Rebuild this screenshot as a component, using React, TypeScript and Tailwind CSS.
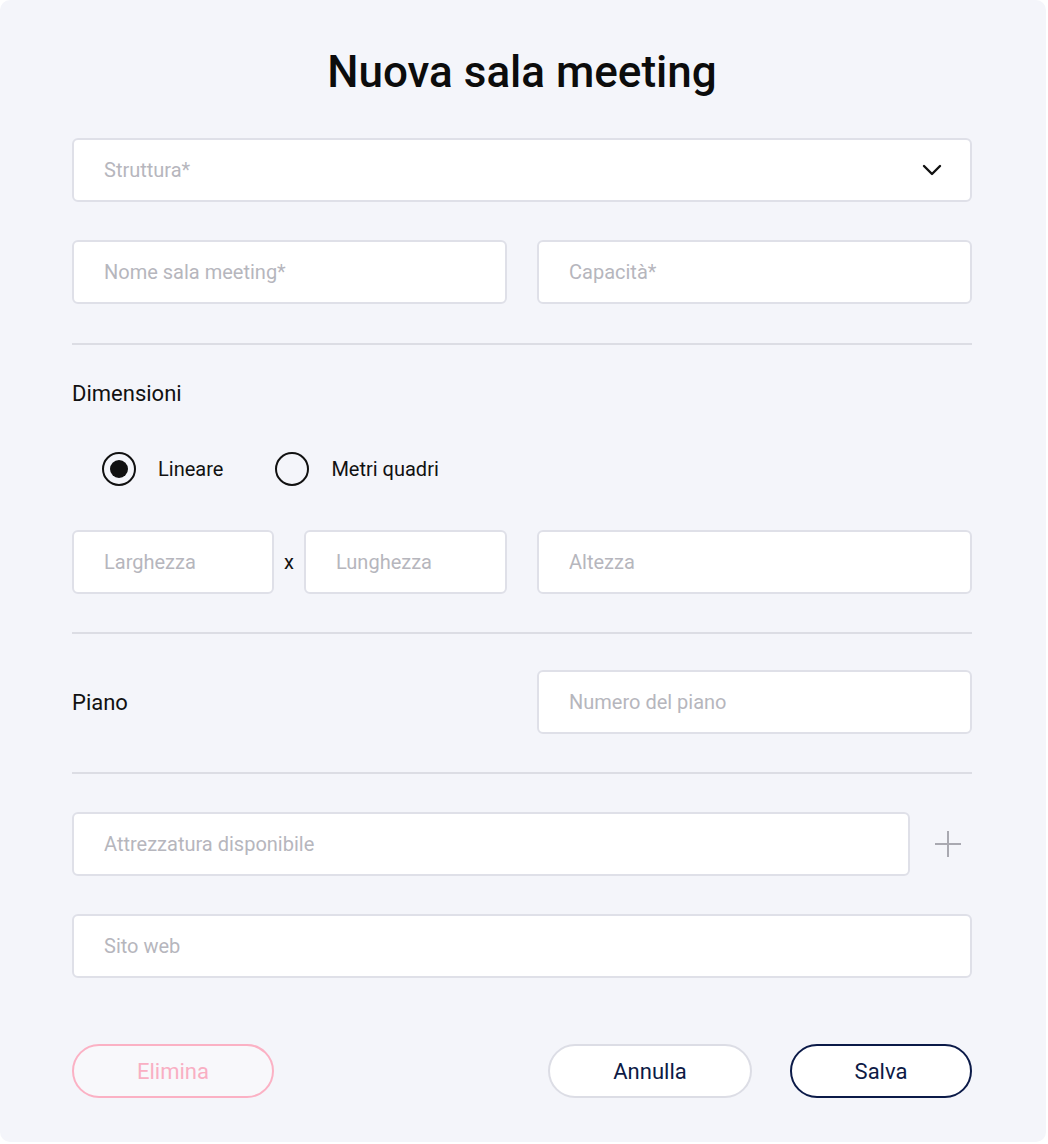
import { useState } from 'react'

const font = { fontFamily: 'Roboto, "Liberation Sans", sans-serif' }

function Field({ placeholder, className = '' }: { placeholder: string; className?: string }) {
  return (
    <input
      placeholder={placeholder}
      className={`h-[64px] min-w-0 rounded-[6px] border-2 border-[#dfe0e8] bg-white px-[30px] text-[20px] text-[#1a1a1a] placeholder:text-[#b6b6bd] outline-none ${className}`}
    />
  )
}

function Radio({ label, checked, onClick }: { label: string; checked: boolean; onClick: () => void }) {
  return (
    <button onClick={onClick} className="flex items-center gap-[22px]">
      <span className="flex h-[34px] w-[34px] items-center justify-center rounded-full border-2 border-[#111]">
        {checked && <span className="h-[18px] w-[18px] rounded-full bg-[#111]" />}
      </span>
      <span className="text-[20px] text-[#111]">{label}</span>
    </button>
  )
}

export default function App() {
  const [unit, setUnit] = useState<'lin' | 'mq'>('lin')

  return (
    <div className="min-h-screen bg-white" style={font}>
      <div className="flex h-[1142px] w-[1046px] flex-col rounded-[10px] bg-[#f4f5fa] pl-[72px] pr-[74px] pt-[46px]">
        <h1 className="text-center text-[44px] font-medium leading-[52px] text-[#0c0c0c]">Nuova sala meeting</h1>

        {/* Struttura */}
        <div className="mt-[40px] flex h-[64px] items-center justify-between rounded-[6px] border-2 border-[#dfe0e8] bg-white pl-[30px] pr-[28px]">
          <span className="text-[20px] text-[#b6b6bd]">Struttura*</span>
          <svg width="20" height="12" viewBox="0 0 20 12" fill="none">
            <path d="M2 2l8 8 8-8" stroke="#111" strokeWidth="2.4" strokeLinecap="round" strokeLinejoin="round" />
          </svg>
        </div>

        <div className="mt-[38px] grid grid-cols-2 gap-[30px]">
          <Field placeholder="Nome sala meeting*" />
          <Field placeholder="Capacità*" />
        </div>

        <div className="mt-[39px] h-[2px] bg-[#dcdde4]" />

        <div className="mt-[34px] text-[22px] leading-[30px] text-[#111]">Dimensioni</div>

        <div className="mt-[43px] flex items-center gap-[52px] pl-[30px]">
          <Radio label="Lineare" checked={unit === 'lin'} onClick={() => setUnit('lin')} />
          <Radio label="Metri quadri" checked={unit === 'mq'} onClick={() => setUnit('mq')} />
        </div>

        <div className="mt-[44px] grid grid-cols-2 gap-[30px]">
          <div className="flex items-center">
            <Field placeholder="Larghezza" className="w-[202px]" />
            <span className="w-[30px] text-center text-[20px] text-[#111]">x</span>
            <Field placeholder="Lunghezza" className="flex-1" />
          </div>
          <Field placeholder="Altezza" />
        </div>

        <div className="mt-[38px] h-[2px] bg-[#dcdde4]" />

        <div className="mt-[36px] grid grid-cols-2 items-center gap-[30px]">
          <span className="text-[22px] text-[#111]">Piano</span>
          <Field placeholder="Numero del piano" />
        </div>

        <div className="mt-[38px] h-[2px] bg-[#dcdde4]" />

        <div className="mt-[38px] flex items-center">
          <Field placeholder="Attrezzatura disponibile" className="flex-1" />
          <button className="ml-[25px] mr-[11px] text-[#a9a9b1]">
            <svg width="26" height="26" viewBox="0 0 26 26">
              <path d="M13 0v26M0 13h26" stroke="currentColor" strokeWidth="2" />
            </svg>
          </button>
        </div>

        <Field placeholder="Sito web" className="mt-[38px]" />

        <div className="mt-[66px] flex items-center">
          <button className="h-[54px] w-[202px] rounded-full border-2 border-[#fbb1c4] bg-[#f8f8fb] text-[22px] text-[#f9afc3]">
            Elimina
          </button>
          <div className="ml-auto flex gap-[38px]">
            <button className="h-[54px] w-[204px] rounded-full border-2 border-[#dcdde5] bg-white text-[22px] text-[#0d1a45]">
              Annulla
            </button>
            <button className="h-[54px] w-[182px] rounded-full border-2 border-[#0b1a48] bg-white text-[22px] text-[#0d1a45]">
              Salva
            </button>
          </div>
        </div>
      </div>
    </div>
  )
}
